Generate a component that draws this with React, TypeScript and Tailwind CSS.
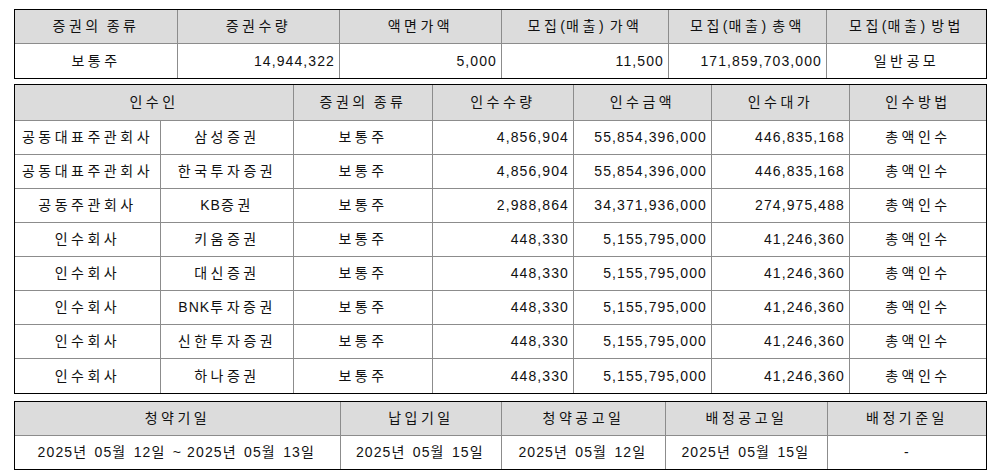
import React from 'react';

type Cell = { text: string; w: number; align?: 'left' | 'center' | 'right' };

const font = { fontFamily: '"Liberation Sans", "Noto Sans CJK KR", sans-serif' };

// Hangul runs get wider spacing, like the bitmap Korean face in the original
const Txt = ({ text }: { text: string }) => (
  <span>
    {text.split(/([\uAC00-\uD7A3]+)/).map((part, i) =>
      /[\uAC00-\uD7A3]/.test(part) ? (
        <span key={i} className="tracking-[3.5px]">{part}</span>
      ) : (
        <span key={i} className="tracking-[1.1px]">{part}</span>
      )
    )}
  </span>
);

const Row = ({ cells, head, last, h }: { cells: Cell[]; head?: boolean; last?: boolean; h: string }) => (
  <div className={`flex ${h} ${head ? 'bg-[#dcdcdc]' : 'bg-white'} ${last ? '' : 'border-b border-[#8c8c8c]'}`}>
    {cells.map((c, i) => (
      <div
        key={i}
        style={{ width: c.w }}
        className={`flex items-center shrink-0 whitespace-nowrap ${i < cells.length - 1 ? 'border-r border-[#8c8c8c]' : ''} ${
          c.align === 'right' ? 'justify-end pr-[4px]' : 'justify-center'
        }`}
      >
        <Txt text={c.text} />
      </div>
    ))}
  </div>
);

const Box = ({ children, className = '' }: { children: React.ReactNode; className?: string }) => (
  <div className={`w-[973px] border border-black ${className}`}>{children}</div>
);

const w1 = [163, 162, 162, 167, 158, 159];
const w2 = [146, 133, 139, 141, 138, 138, 136];
const w3 = [326, 161, 164, 162, 158];

const underwriters = [
  ['공동대표주관회사', '삼성증권', '4,856,904', '55,854,396,000', '446,835,168'],
  ['공동대표주관회사', '한국투자증권', '4,856,904', '55,854,396,000', '446,835,168'],
  ['공동주관회사', 'KB증권', '2,988,864', '34,371,936,000', '274,975,488'],
  ['인수회사', '키움증권', '448,330', '5,155,795,000', '41,246,360'],
  ['인수회사', '대신증권', '448,330', '5,155,795,000', '41,246,360'],
  ['인수회사', 'BNK투자증권', '448,330', '5,155,795,000', '41,246,360'],
  ['인수회사', '신한투자증권', '448,330', '5,155,795,000', '41,246,360'],
  ['인수회사', '하나증권', '448,330', '5,155,795,000', '41,246,360'],
];

export default function App() {
  return (
    <div className="min-h-screen bg-white pl-[14px] pt-[9px] text-[14px] text-[#111]" style={font}>
      <Box>
        <Row
          head
          h="h-[34px]"
          cells={['증권의 종류', '증권수량', '액면가액', '모집(매출) 가액', '모집(매출) 총액', '모집(매출) 방법'].map((t, i) => ({ text: t, w: w1[i] }))}
        />
        <Row
          last
          h="h-[34px]"
          cells={[
            { text: '보통주', w: w1[0] },
            { text: '14,944,322', w: w1[1], align: 'right' },
            { text: '5,000', w: w1[2], align: 'right' },
            { text: '11,500', w: w1[3], align: 'right' },
            { text: '171,859,703,000', w: w1[4], align: 'right' },
            { text: '일반공모', w: w1[5] },
          ]}
        />
      </Box>

      <Box className="mt-[5px]">
        <Row
          head
          h="h-[36px]"
          cells={[
            { text: '인수인', w: w2[0] + w2[1] },
            ...['증권의 종류', '인수수량', '인수금액', '인수대가', '인수방법'].map((t, i) => ({ text: t, w: w2[i + 2] })),
          ]}
        />
        {underwriters.map((r, idx) => (
          <Row
            key={idx}
            last={idx === underwriters.length - 1}
            h="h-[34px]"
            cells={[
              { text: r[0], w: w2[0] },
              { text: r[1], w: w2[1] },
              { text: '보통주', w: w2[2] },
              { text: r[2], w: w2[3], align: 'right' },
              { text: r[3], w: w2[4], align: 'right' },
              { text: r[4], w: w2[5], align: 'right' },
              { text: '총액인수', w: w2[6] },
            ]}
          />
        ))}
      </Box>

      <Box className="mt-[7px]">
        <Row
          head
          h="h-[34px]"
          cells={['청약기일', '납입기일', '청약공고일', '배정공고일', '배정기준일'].map((t, i) => ({ text: t, w: w3[i] }))}
        />
        <Row
          last
          h="h-[33px]"
          cells={[
            '2025년 05월 12일 ~ 2025년 05월 13일',
            '2025년 05월 15일',
            '2025년 05월 12일',
            '2025년 05월 15일',
            '-',
          ].map((t, i) => ({ text: t, w: w3[i] }))}
        />
      </Box>
    </div>
  );
}
